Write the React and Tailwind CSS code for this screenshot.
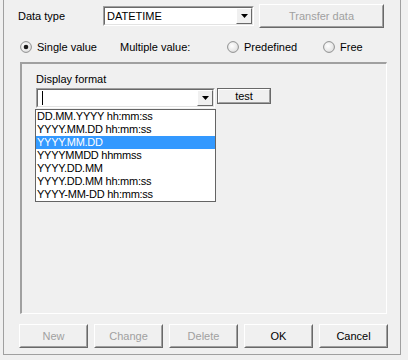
import React from 'react'

const font = { fontFamily: '"Liberation Sans", Arial, sans-serif' }

function Arrow() {
  return (
    <svg width="7" height="4" viewBox="0 0 7 4">
      <path d="M0 0h7L3.5 4z" fill="#000" />
    </svg>
  )
}

function DropButton() {
  return (
    <div className="w-[16px] h-full border border-t-white border-l-white border-r-[#696969] border-b-[#696969] bg-[#f0f0f0] flex items-center justify-center">
      <Arrow />
    </div>
  )
}

function Combo({ width, height, children }) {
  return (
    <div
      className="border border-t-[#a0a0a0] border-l-[#a0a0a0] border-r-white border-b-white"
      style={{ width, height }}
    >
      <div className="h-full border border-t-[#696969] border-l-[#696969] border-r-[#e3e3e3] border-b-[#e3e3e3] bg-white flex">
        <div className="flex-1 flex items-center pl-[1px] overflow-hidden">{children}</div>
        <DropButton />
      </div>
    </div>
  )
}

function Button({ label, disabled, className = '' }) {
  return (
    <div className={`border border-t-white border-l-white border-r-[#696969] border-b-[#696969] ${className}`}>
      <div className={`h-full border border-t-[#f0f0f0] border-l-[#f0f0f0] border-r-[#a0a0a0] border-b-[#a0a0a0] flex items-center justify-center text-[11px] ${disabled ? 'text-[#a0a0a0]' : 'text-black'}`}>
        {label}
      </div>
    </div>
  )
}

function Radio({ checked }) {
  return (
    <svg width="12" height="12" viewBox="0 0 12 12">
      <defs>
        <radialGradient id="rg" cx="0.4" cy="0.4" r="0.7">
          <stop offset="0" stopColor="#ffffff" />
          <stop offset="1" stopColor="#dcdcdc" />
        </radialGradient>
      </defs>
      <circle cx="6" cy="6" r="5.4" fill="url(#rg)" stroke="#8e8f8f" strokeWidth="1" />
      {checked && <circle cx="6" cy="6" r="2.3" fill="#1b1b1b" />}
    </svg>
  )
}

const formats = [
  'DD.MM.YYYY hh:mm:ss',
  'YYYY.MM.DD hh:mm:ss',
  'YYYY.MM.DD',
  'YYYYMMDD hhmmss',
  'YYYY.DD.MM',
  'YYYY.DD.MM hh:mm:ss',
  'YYYY-MM-DD hh:mm:ss',
]

export default function App() {
  return (
    <div className="w-[408px] h-[360px] bg-[#f0f0f0] text-[11px] leading-[13px] text-black overflow-hidden" style={font}>
      <div className="ml-[3px] w-[398px] h-[355px] border-x border-b border-[#a0a0a0] flex flex-col">
        {/* data type row */}
        <div className="mt-[4px] flex items-start h-[24px]">
          <div className="ml-[14px] w-[85px] mt-[6px]">Data type</div>
          <div className="mt-[2px]">
            <Combo width={151} height={20}>
              <span className="pl-[1px]">DATETIME</span>
            </Combo>
          </div>
          <Button label="Transfer data" disabled className="ml-[5px] w-[125px] h-[24px]" />
        </div>

        {/* value kind row */}
        <div className="mt-[13px] flex items-center h-[12px]">
          <div className="ml-[16px] w-[100px] flex items-center">
            <Radio checked />
            <span className="ml-[5px]">Single value</span>
          </div>
          <div className="w-[107px]">Multiple value:</div>
          <div className="w-[96px] flex items-center">
            <Radio />
            <span className="ml-[5px]">Predefined</span>
          </div>
          <div className="flex items-center">
            <Radio />
            <span className="ml-[5px]">Free</span>
          </div>
        </div>

        {/* group box */}
        <div className="relative mt-[9px] ml-[16px] w-[367px] h-[252px] border-l-2 border-t-2 border-r border-b border-l-[#a0a0a0] border-t-[#a0a0a0] border-r-white border-b-white">
          <div className="ml-[14px] mt-[9px]">Display format</div>
          <div className="mt-[2px] ml-[14px] flex items-start">
            <Combo width={179} height={20}>
              <span className="ml-[3px] w-[1px] h-[14px] bg-black" />
            </Combo>
            <div className="ml-[2px] w-[54px] h-[16px] border border-[#696969]">
              <div className="h-full border border-t-white border-l-white border-r-[#a0a0a0] border-b-[#a0a0a0] flex items-center justify-center">
                test
              </div>
            </div>
          </div>

          <div className="absolute left-[13px] top-[45px] w-[181px] h-[93px] border border-[#646464] bg-white">
            {formats.map((f, i) => (
              <div
                key={f}
                className={`h-[13px] pl-[1px] flex items-center whitespace-nowrap tracking-[-0.25px] ${i === 2 ? 'bg-[#3399ff] text-white' : ''}`}
              >
                {f}
              </div>
            ))}
          </div>
        </div>

        {/* buttons */}
        <div className="mt-[10px] ml-[15px] flex gap-[6px]">
          <Button label="New" disabled className="w-[69px] h-[24px]" />
          <Button label="Change" disabled className="w-[69px] h-[24px]" />
          <Button label="Delete" disabled className="w-[69px] h-[24px]" />
          <Button label="OK" className="w-[69px] h-[24px]" />
          <Button label="Cancel" className="w-[69px] h-[24px]" />
        </div>
      </div>
    </div>
  )
}
